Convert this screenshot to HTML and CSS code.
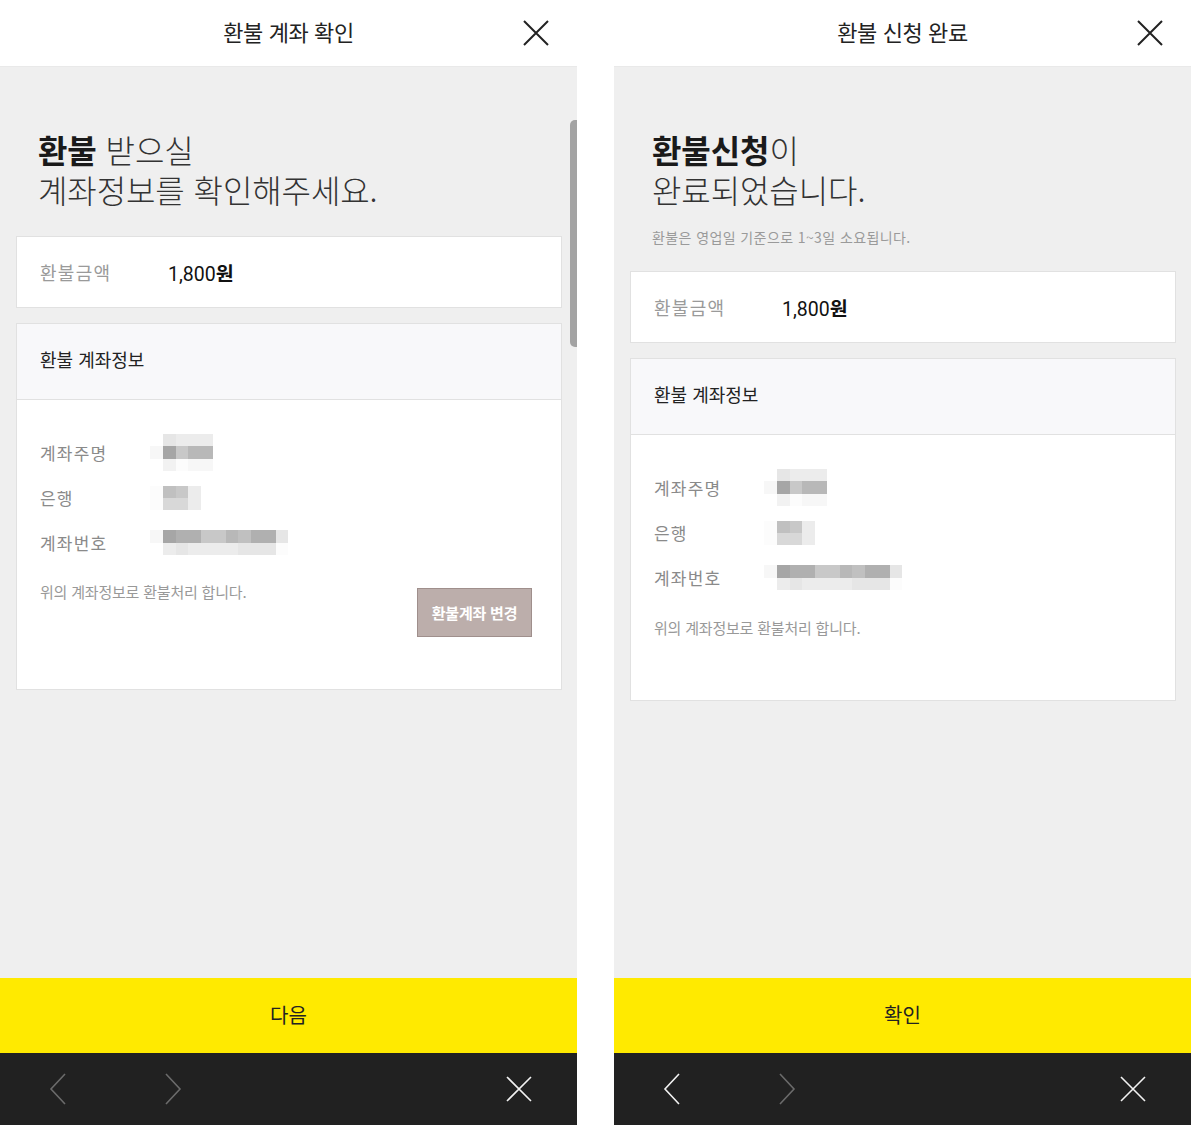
FILE: index.html
```html
<!DOCTYPE html>
<html lang="ko">
<head>
<meta charset="utf-8">
<title>환불</title>
<link rel="stylesheet" href="styles.css">
</head>
<body>
<div class="screens">

  <section class="screen">
    <header class="topbar">
      <span></span>
      <h1 class="topbar-title">환불 계좌 확인</h1>
      <button class="topbar-close" aria-label="닫기">
        <svg width="26" height="26" viewBox="0 0 26 26"><path d="M1 1 L25 25 M25 1 L1 25" stroke="#222" stroke-width="2" fill="none"/></svg>
      </button>
    </header>
    <main class="content">
      <div class="scrollbar"></div>
      <h2 class="headline"><span class="hl-line"><strong>환불</strong> 받으실</span><span class="hl-line">계좌정보를 확인해주세요.</span></h2>
      <div class="card amount">
        <span class="amount-label">환불금액</span>
        <span class="amount-value">1,800<b>원</b></span>
      </div>
      <div class="card account">
        <div class="account-head">환불 계좌정보</div>
        <div class="account-body">
          <div class="row">
            <span class="row-label">계좌주명</span>
            <div class="pix pix-name">
              <i class="s-ff"></i><i class="s-e6"></i><i class="s-ec"></i><i class="s-ec"></i><i class="s-ec"></i>
              <i class="s-f7"></i><i class="s-a6"></i><i class="s-c8"></i><i class="s-b8"></i><i class="s-b8"></i>
              <i class="s-ff"></i><i class="s-f2"></i><i class="s-fc"></i><i class="s-f7"></i><i class="s-f7"></i>
            </div>
          </div>
          <div class="row">
            <span class="row-label">은행</span>
            <div class="pix pix-bank">
              <i class="s-fc"></i><i class="s-c0"></i><i class="s-c8"></i><i class="s-ec"></i>
              <i class="s-fc"></i><i class="s-d8"></i><i class="s-d8"></i><i class="s-ec"></i>
            </div>
          </div>
          <div class="row">
            <span class="row-label">계좌번호</span>
            <div class="pix pix-num">
              <i class="s-f7"></i><i class="s-a6"></i><i class="s-b0"></i><i class="s-b0"></i><i class="s-c8"></i><i class="s-c8"></i><i class="s-b8"></i><i class="s-c0"></i><i class="s-b0"></i><i class="s-b0"></i><i class="s-e6"></i>
              <i class="s-ff"></i><i class="s-ec"></i><i class="s-e6"></i><i class="s-ec"></i><i class="s-ec"></i><i class="s-ec"></i><i class="s-ec"></i><i class="s-e6"></i><i class="s-e6"></i><i class="s-e6"></i><i class="s-fc"></i>
            </div>
          </div>
          <div class="note-row">
            <p class="note">위의 계좌정보로 환불처리 합니다.</p>
            <button class="change-btn">환불계좌 변경</button>
          </div>
        </div>
      </div>
    </main>
    <button class="primary">다음</button>
    <nav class="navbar">
      <svg class="nav-icon" width="18" height="32" viewBox="0 0 18 32"><path d="M16 1 L2 16 L16 31" stroke="#6b6b6b" stroke-width="1.6" fill="none"/></svg>
      <svg class="nav-icon nav-fwd" width="18" height="32" viewBox="0 0 18 32"><path d="M2 1 L16 16 L2 31" stroke="#6b6b6b" stroke-width="1.6" fill="none"/></svg>
      <svg class="nav-close" width="26" height="26" viewBox="0 0 26 26"><path d="M1 1 L25 25 M25 1 L1 25" stroke="#f2f2f2" stroke-width="1.6" fill="none"/></svg>
    </nav>
  </section>

  <section class="screen">
    <header class="topbar">
      <span></span>
      <h1 class="topbar-title">환불 신청 완료</h1>
      <button class="topbar-close" aria-label="닫기">
        <svg width="26" height="26" viewBox="0 0 26 26"><path d="M1 1 L25 25 M25 1 L1 25" stroke="#222" stroke-width="2" fill="none"/></svg>
      </button>
    </header>
    <main class="content">
      <h2 class="headline"><span class="hl-line"><strong>환불신청</strong>이</span><span class="hl-line">완료되었습니다.</span></h2>
      <p class="subtext">환불은 영업일 기준으로 1~3일 소요됩니다.</p>
      <div class="card amount amount-done">
        <span class="amount-label">환불금액</span>
        <span class="amount-value">1,800<b>원</b></span>
      </div>
      <div class="card account">
        <div class="account-head">환불 계좌정보</div>
        <div class="account-body account-body-done">
          <div class="row">
            <span class="row-label">계좌주명</span>
            <div class="pix pix-name">
              <i class="s-ff"></i><i class="s-e6"></i><i class="s-ec"></i><i class="s-ec"></i><i class="s-ec"></i>
              <i class="s-f7"></i><i class="s-a6"></i><i class="s-c8"></i><i class="s-b8"></i><i class="s-b8"></i>
              <i class="s-ff"></i><i class="s-f2"></i><i class="s-fc"></i><i class="s-f7"></i><i class="s-f7"></i>
            </div>
          </div>
          <div class="row">
            <span class="row-label">은행</span>
            <div class="pix pix-bank">
              <i class="s-fc"></i><i class="s-c0"></i><i class="s-c8"></i><i class="s-ec"></i>
              <i class="s-fc"></i><i class="s-d8"></i><i class="s-d8"></i><i class="s-ec"></i>
            </div>
          </div>
          <div class="row">
            <span class="row-label">계좌번호</span>
            <div class="pix pix-num">
              <i class="s-f7"></i><i class="s-a6"></i><i class="s-b0"></i><i class="s-b0"></i><i class="s-c8"></i><i class="s-c8"></i><i class="s-b8"></i><i class="s-c0"></i><i class="s-b0"></i><i class="s-b0"></i><i class="s-e6"></i>
              <i class="s-ff"></i><i class="s-ec"></i><i class="s-e6"></i><i class="s-ec"></i><i class="s-ec"></i><i class="s-ec"></i><i class="s-ec"></i><i class="s-e6"></i><i class="s-e6"></i><i class="s-e6"></i><i class="s-fc"></i>
            </div>
          </div>
          <div class="note-row">
            <p class="note">위의 계좌정보로 환불처리 합니다.</p>
          </div>
        </div>
      </div>
    </main>
    <button class="primary">확인</button>
    <nav class="navbar">
      <svg class="nav-icon" width="18" height="32" viewBox="0 0 18 32"><path d="M16 1 L2 16 L16 31" stroke="#f2f2f2" stroke-width="1.6" fill="none"/></svg>
      <svg class="nav-icon nav-fwd" width="18" height="32" viewBox="0 0 18 32"><path d="M2 1 L16 16 L2 31" stroke="#6b6b6b" stroke-width="1.6" fill="none"/></svg>
      <svg class="nav-close" width="26" height="26" viewBox="0 0 26 26"><path d="M1 1 L25 25 M25 1 L1 25" stroke="#f2f2f2" stroke-width="1.6" fill="none"/></svg>
    </nav>
  </section>

</div>
</body>
</html>
```

FILE: styles.css
```css
* { box-sizing: border-box; margin: 0; padding: 0; }

body {
  background: #fff;
  font-family: "Noto Sans CJK KR", "Noto Sans", sans-serif;
  color: #222;
}

.screens {
  display: flex;
  gap: 37px;
  width: 1191px;
  height: 1125px;
}

.screen {
  width: 577px;
  height: 1125px;
  display: flex;
  flex-direction: column;
  background: #efefef;
}

.topbar {
  height: 67px;
  flex: none;
  background: #fff;
  border-bottom: 1px solid #e9e9e9;
  display: grid;
  grid-template-columns: 1fr auto 1fr;
  align-items: center;
}

.topbar-title {
  font-size: 22px;
  font-weight: 400;
  color: #222;
  letter-spacing: -0.4px;
  margin-top: -4px;
}

.topbar-close {
  justify-self: end;
  margin-right: 28px;
  margin-top: -1px;
  width: 26px;
  height: 26px;
  border: 0;
  background: none;
  display: block;
}
.topbar-close svg { display: block; }

.content {
  flex: 1;
  position: relative;
  padding: 62px 15px 0 16px;
  overflow: hidden;
}

.scrollbar {
  position: absolute;
  right: 0;
  top: 53px;
  width: 7px;
  height: 227px;
  background: #a3a3a3;
  border-radius: 5px 0 0 5px;
}

.headline {
  padding-left: 22px;
  font-size: 32px;
  font-weight: 300;
  letter-spacing: -0.1px;
  color: #333;
}
.hl-line {
  display: block;
  height: 40px;
  line-height: 40px;
}
.headline strong {
  font-weight: 700;
  color: #1a1a1a;
}

.subtext {
  margin-top: 18px;
  padding-left: 22px;
  font-size: 14px;
  line-height: 20px;
  color: #9a9a9a;
  letter-spacing: 0.4px;
}

.card {
  background: #fff;
  border: 1px solid #e1e1e1;
}

.amount {
  margin-top: 27px;
  height: 72px;
  display: flex;
  align-items: center;
  padding-left: 23px;
}
.amount-done { margin-top: 24px; }

.amount-label {
  width: 128px;
  font-size: 18px;
  color: #9a9a9a;
  letter-spacing: 1.3px;
}

.amount-value {
  font-family: Roboto, "Noto Sans CJK KR", sans-serif;
  font-size: 19.5px;
  color: #111;
}
.amount-value b { font-family: "Noto Sans CJK KR", sans-serif; font-weight: 700; }

.account { margin-top: 15px; }

.account-head {
  height: 76px;
  background: #f8f8fa;
  border-bottom: 1px solid #e1e1e1;
  padding: 0 0 6px 23px;
  display: flex;
  align-items: center;
  font-size: 18px;
  color: #222;
}

.account-body {
  padding: 30px 29px 52px 23px;
}
.account-body-done { padding-bottom: 52px; }

.row {
  height: 45px;
  display: flex;
  align-items: center;
}

.row-label {
  width: 110px;
  font-size: 17px;
  color: #8a8a8a;
  letter-spacing: 1.2px;
}

.pix { display: grid; }
.pix-name { grid-template-columns: 13px repeat(4, 12.5px); grid-auto-rows: 12.3px; }
.pix-bank { grid-template-columns: 13px repeat(3, 12.5px); grid-auto-rows: 12px; }
.pix-num { grid-template-columns: 13px repeat(10, 12.5px); grid-auto-rows: 12.5px; }

.s-ff { background: #fff; }
.s-fc { background: #fcfcfc; }
.s-f7 { background: #f7f7f7; }
.s-f2 { background: #f2f2f2; }
.s-ec { background: #ececec; }
.s-e6 { background: #e6e6e6; }
.s-d8 { background: #d8d8d8; }
.s-c8 { background: #c8c8c8; }
.s-c0 { background: #c0c0c0; }
.s-b8 { background: #b8b8b8; }
.s-b0 { background: #b0b0b0; }
.s-a6 { background: #a6a6a6; }

.note-row {
  margin-top: 17px;
  display: flex;
  justify-content: space-between;
  align-items: flex-start;
}
.account-body-done .note-row { margin-top: 18px; height: 30px; }

.note {
  font-size: 15px;
  line-height: 20px;
  color: #999;
  letter-spacing: -0.2px;
}

.change-btn {
  margin-top: 6px;
  width: 115px;
  height: 49px;
  background: #bcaeab;
  border: 1px solid #9f8f8c;
  color: #fff;
  font-family: "Noto Sans CJK KR", sans-serif;
  font-size: 15px;
  font-weight: 700;
  letter-spacing: -0.2px;
}

.primary {
  flex: none;
  height: 75px;
  border: 0;
  background: #ffea00;
  font-family: "Noto Sans CJK KR", sans-serif;
  font-size: 20px;
  color: #222;
  padding-bottom: 2px;
}

.navbar {
  flex: none;
  height: 72px;
  background: #212121;
  display: flex;
  align-items: center;
  padding: 0 45px 0 49px;
}
.nav-icon { display: block; }
.nav-fwd { margin-left: 97px; }
.nav-close { display: block; margin-left: auto; }
```
